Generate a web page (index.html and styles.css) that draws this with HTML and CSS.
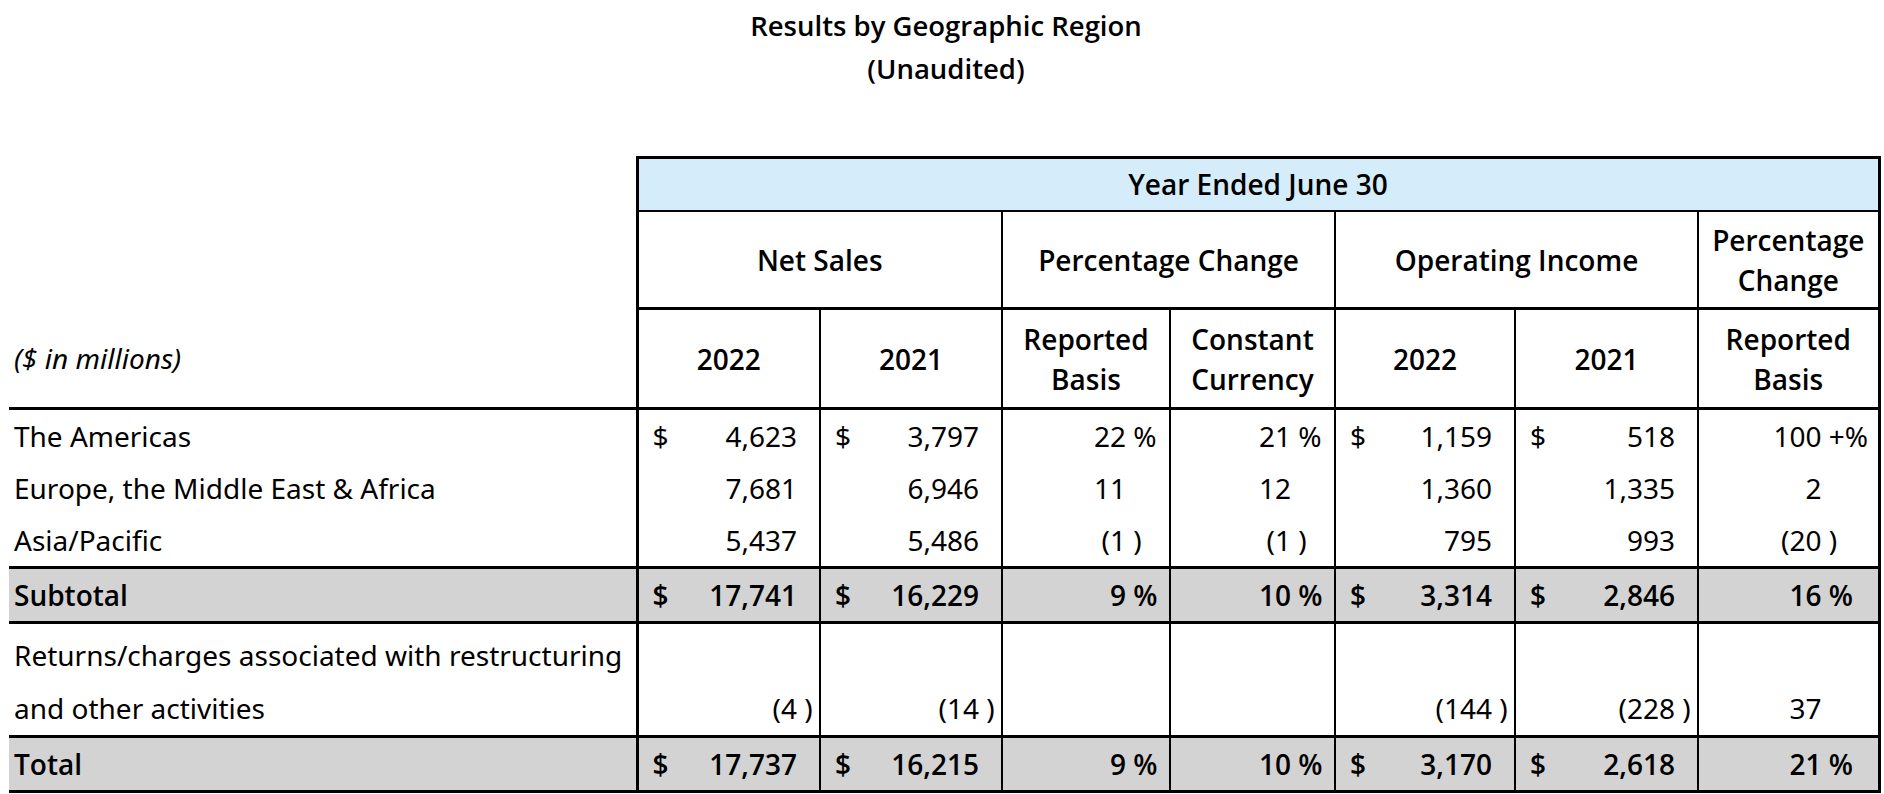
FILE: index.html
```html
<!DOCTYPE html>
<html lang="en">
<head>
<meta charset="utf-8">
<title>Results by Geographic Region</title>
<link rel="stylesheet" href="styles.css">
</head>
<body>
<div class="page">
  <h1 class="title">Results by Geographic Region<br>(Unaudited)</h1>
  <table class="fin">
    <colgroup>
      <col class="c-label"><col class="c-ns1"><col class="c-ns2"><col class="c-rb"><col class="c-cc"><col class="c-oi1"><col class="c-oi2"><col class="c-pc">
    </colgroup>
    <thead>
      <tr>
        <th class="lh"></th>
        <th class="h h1 first last" colspan="7">Year Ended June 30</th>
      </tr>
      <tr>
        <th class="lh"></th>
        <th class="h h2 first" colspan="2">Net Sales</th>
        <th class="h h2" colspan="2">Percentage Change</th>
        <th class="h h2" colspan="2">Operating Income</th>
        <th class="h h2 last">Percentage<br>Change</th>
      </tr>
      <tr>
        <th class="lh units">($ in millions)</th>
        <th class="h h3 first">2022</th>
        <th class="h h3">2021</th>
        <th class="h h3">Reported<br>Basis</th>
        <th class="h h3">Constant<br>Currency</th>
        <th class="h h3">2022</th>
        <th class="h h3">2021</th>
        <th class="h h3 last">Reported<br>Basis</th>
      </tr>
    </thead>
    <tbody>
      <tr class="row">
        <td class="lbl">The Americas</td>
        <td class="v m first"><div class="val"><span class="cur">$</span><span class="amt">4,623</span><span class="sfx"></span></div></td>
        <td class="v m"><div class="val"><span class="cur">$</span><span class="amt">3,797</span><span class="sfx"></span></div></td>
        <td class="v pct"><div class="val"><span class="amt">22</span><span class="sfx">%</span></div></td>
        <td class="v pct"><div class="val"><span class="amt">21</span><span class="sfx">%</span></div></td>
        <td class="v m"><div class="val"><span class="cur">$</span><span class="amt">1,159</span><span class="sfx"></span></div></td>
        <td class="v m"><div class="val"><span class="cur">$</span><span class="amt">518</span><span class="sfx"></span></div></td>
        <td class="v pl last"><div class="val"><span class="amt">100</span><span class="sfx">+%</span></div></td>
      </tr>
      <tr class="row">
        <td class="lbl">Europe, the Middle East &amp; Africa</td>
        <td class="v m first"><div class="val"><span class="amt">7,681</span><span class="sfx"></span></div></td>
        <td class="v m"><div class="val"><span class="amt">6,946</span><span class="sfx"></span></div></td>
        <td class="v pct"><div class="val"><span class="amt">11</span><span class="sfx"></span></div></td>
        <td class="v pct"><div class="val"><span class="amt">12</span><span class="sfx"></span></div></td>
        <td class="v m"><div class="val"><span class="amt">1,360</span><span class="sfx"></span></div></td>
        <td class="v m"><div class="val"><span class="amt">1,335</span><span class="sfx"></span></div></td>
        <td class="v pl last"><div class="val"><span class="amt">2</span><span class="sfx"></span></div></td>
      </tr>
      <tr class="row">
        <td class="lbl">Asia/Pacific</td>
        <td class="v m first"><div class="val"><span class="amt">5,437</span><span class="sfx"></span></div></td>
        <td class="v m"><div class="val"><span class="amt">5,486</span><span class="sfx"></span></div></td>
        <td class="v pct"><div class="val"><span class="amt">(1</span><span class="sfx">)</span></div></td>
        <td class="v pct"><div class="val"><span class="amt">(1</span><span class="sfx">)</span></div></td>
        <td class="v m"><div class="val"><span class="amt">795</span><span class="sfx"></span></div></td>
        <td class="v m"><div class="val"><span class="amt">993</span><span class="sfx"></span></div></td>
        <td class="v pl last"><div class="val"><span class="amt">(20</span><span class="sfx">)</span></div></td>
      </tr>
      <tr class="row tot">
        <td class="lbl">Subtotal</td>
        <td class="v m first"><div class="val"><span class="cur">$</span><span class="amt">17,741</span><span class="sfx"></span></div></td>
        <td class="v m"><div class="val"><span class="cur">$</span><span class="amt">16,229</span><span class="sfx"></span></div></td>
        <td class="v pct"><div class="val"><span class="amt">9</span><span class="sfx">%</span></div></td>
        <td class="v pct"><div class="val"><span class="amt">10</span><span class="sfx">%</span></div></td>
        <td class="v m"><div class="val"><span class="cur">$</span><span class="amt">3,314</span><span class="sfx"></span></div></td>
        <td class="v m"><div class="val"><span class="cur">$</span><span class="amt">2,846</span><span class="sfx"></span></div></td>
        <td class="v pl last"><div class="val"><span class="amt">16</span><span class="sfx">%</span></div></td>
      </tr>
      <tr class="row two">
        <td class="lbl">Returns/charges associated with restructuring<br>and other activities</td>
        <td class="v m first"><div class="val"><span class="amt">(4</span><span class="sfx">)</span></div></td>
        <td class="v m"><div class="val"><span class="amt">(14</span><span class="sfx">)</span></div></td>
        <td class="v pct"></td>
        <td class="v pct"></td>
        <td class="v m"><div class="val"><span class="amt">(144</span><span class="sfx">)</span></div></td>
        <td class="v m"><div class="val"><span class="amt">(228</span><span class="sfx">)</span></div></td>
        <td class="v pl last"><div class="val"><span class="amt">37</span><span class="sfx"></span></div></td>
      </tr>
      <tr class="row tot">
        <td class="lbl">Total</td>
        <td class="v m first"><div class="val"><span class="cur">$</span><span class="amt">17,737</span><span class="sfx"></span></div></td>
        <td class="v m"><div class="val"><span class="cur">$</span><span class="amt">16,215</span><span class="sfx"></span></div></td>
        <td class="v pct"><div class="val"><span class="amt">9</span><span class="sfx">%</span></div></td>
        <td class="v pct"><div class="val"><span class="amt">10</span><span class="sfx">%</span></div></td>
        <td class="v m"><div class="val"><span class="cur">$</span><span class="amt">3,170</span><span class="sfx"></span></div></td>
        <td class="v m"><div class="val"><span class="cur">$</span><span class="amt">2,618</span><span class="sfx"></span></div></td>
        <td class="v pl last"><div class="val"><span class="amt">21</span><span class="sfx">%</span></div></td>
      </tr>
    </tbody>
  </table>
</div>
</body>
</html>
```

FILE: styles.css
```css
* { box-sizing: border-box; }

html, body {
  margin: 0;
  padding: 0;
  background: #ffffff;
  color: #000000;
  font-family: "Noto Sans", "Open Sans", "DejaVu Sans", sans-serif;
}

.page {
  padding: 4px 4px 0 9px;
}

.title {
  margin: 0;
  padding-left: 3px;
  text-align: center;
  font-family: "Open Sans", "Noto Sans", sans-serif;
  font-size: 27.5px;
  font-weight: 600;
  line-height: 43px;
}

.fin {
  margin-top: 66px;
  border-collapse: collapse;
  table-layout: fixed;
  width: 1870px;
  font-size: 28px;
}

.c-label { width: 628px; }
.c-ns1 { width: 183px; }
.c-ns2 { width: 182px; }
.c-rb { width: 168px; }
.c-cc { width: 165px; }
.c-oi1 { width: 180px; }
.c-oi2 { width: 183px; }
.c-pc { width: 181px; }

th, td {
  padding: 0;
  border: none;
}

/* header */
.lh {
  text-align: left;
  font-weight: 400;
}

.units {
  font-style: italic;
  padding-left: 5px;
  vertical-align: middle;
  border-bottom: 3px solid #000;
  line-height: 40px;
  white-space: nowrap;
}

.h {
  font-family: "Open Sans", "Noto Sans", sans-serif;
  font-weight: 600;
  text-align: center;
  line-height: 40px;
  vertical-align: middle;
  border-right: 2px solid #000;
}

.h1 {
  background: #d5ecfa;
  border-top: 3px solid #000;
  border-bottom: 2px solid #000;
  line-height: 51px;
}

.h2 {
  padding: 8px 2px 7px;
  border-bottom: 3px solid #000;
}

.h3 {
  padding: 9px 2px 8px;
  border-bottom: 3px solid #000;
}

.first { border-left: 3px solid #000; }
.last { border-right: 3px solid #000; }

/* body */
.row td {
  line-height: 52px;
  vertical-align: top;
}

.lbl {
  padding-left: 5px;
  white-space: nowrap;
}

.v {
  border-right: 2px solid #000;
}

.v.first { border-left: 3px solid #000; }
.v.last { border-right: 3px solid #000; }

.val {
  display: flex;
  align-items: baseline;
  white-space: nowrap;
}

.cur { flex: none; }

.amt {
  flex: none;
  margin-left: auto;
}

.sfx {
  flex: none;
  padding-left: 0.26em;
  text-align: left;
}

.m { padding: 0 5px 0 14px; }
.m .sfx { width: 17px; }

.pct { padding: 0 12px 0 6px; }
.pct .sfx { width: 31px; }

.pl { padding: 0 9px 0 6px; }
.pl .sfx { width: 47px; }

.tot td {
  background: #d3d3d3;
  font-family: "Open Sans", "Noto Sans", sans-serif;
  font-weight: 600;
  border-top: 3px solid #000;
  border-bottom: 3px solid #000;
}

.two .lbl {
  padding-top: 5px;
  line-height: 53px;
}

.two .v {
  vertical-align: bottom;
  line-height: 53px;
}
```
